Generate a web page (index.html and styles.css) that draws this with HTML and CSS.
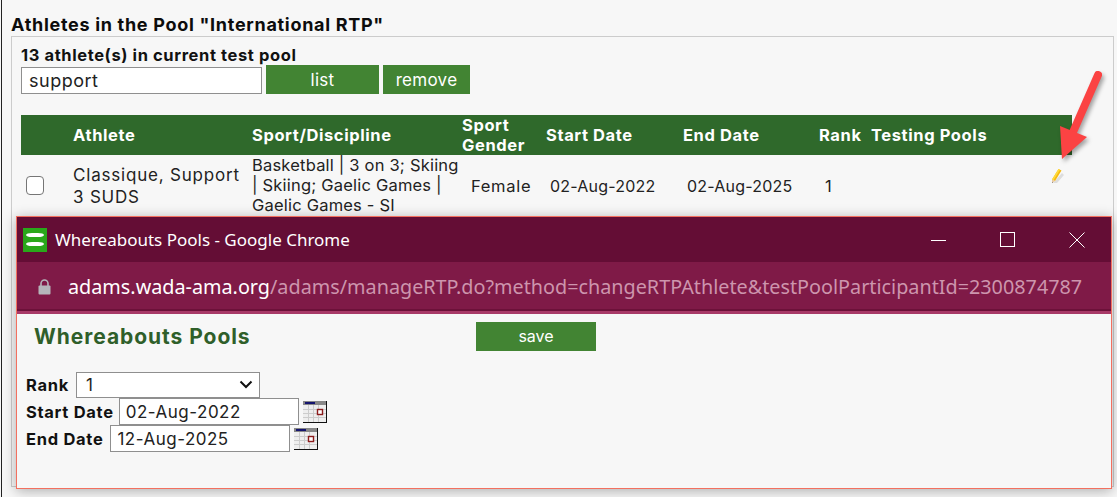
FILE: index.html
```html
<!DOCTYPE html>
<html lang="en">
<head>
  <meta charset="UTF-8" />
  <title>Athletes in the Pool</title>
  <link rel="stylesheet" href="styles.css">
</head>
<body>

<div class="page">
  <h2 class="page-title">Athletes in the Pool "International RTP"</h2>

  <div class="panel">
    <div class="count">13 athlete(s) in current test pool</div>
    <div class="search-row">
      <input class="search-input" type="text" value="support" />
      <button class="btn btn-list">list</button>
      <button class="btn btn-remove">remove</button>
    </div>

    <table class="athletes">
      <colgroup>
        <col class="col-check"><col class="col-athlete"><col class="col-sport"><col class="col-gender">
        <col class="col-start"><col class="col-end"><col class="col-rank"><col class="col-pools">
      </colgroup>
      <thead>
        <tr>
          <th></th>
          <th>Athlete</th>
          <th>Sport/Discipline</th>
          <th>Sport Gender</th>
          <th>Start Date</th>
          <th>End Date</th>
          <th>Rank</th>
          <th>Testing Pools</th>
        </tr>
      </thead>
      <tbody>
        <tr>
          <td><span class="checkbox"></span></td>
          <td class="athlete-name">Classique, Support 3 SUDS</td>
          <td class="sport-cell">Basketball | 3 on 3; Skiing | Skiing; Gaelic Games | Gaelic Games - SI</td>
          <td class="gender-cell">Female</td>
          <td class="date-cell">02-Aug-2022</td>
          <td class="date-cell">02-Aug-2025</td>
          <td class="rank-cell">1</td>
          <td class="pencil-cell">
            <svg class="pencil" width="14" height="16" viewBox="0 0 14 16">
              <path d="M11 5 L13 7 L6 15 L2 15 Z" fill="#ddd"/>
              <path d="M7.5 1 L10.5 2.5 L4 13 L1 11.5 Z" fill="#f7b90f"/>
              <path d="M7.5 1 L9 1.8 L2.5 12.3 L1 11.5 Z" fill="#ffdc3c"/>
              <path d="M1 11.5 L4 13 L1 15 Z" fill="#e8c9a0"/>
              <path d="M1 14 L2 14.4 L1 15 Z" fill="#555"/>
            </svg>
          </td>
        </tr>
      </tbody>
    </table>
  </div>
</div>

<!-- red annotation arrow -->
<svg class="arrow" width="60" height="110" viewBox="0 0 60 110">
  <line x1="49" y1="6" x2="21" y2="70" stroke="#fb4343" stroke-width="8" stroke-linecap="round"/>
  <path d="M11 57 L38 68 L13 90 Z" fill="#fb4343"/>
</svg>

<!-- popup window -->
<div class="popup">
  <div class="popup-titlebar">
    <div class="favicon"><span></span><span></span></div>
    <div class="popup-title">Whereabouts Pools - Google Chrome</div>
    <div class="window-btns">
      <svg width="16" height="16" viewBox="0 0 16 16"><line x1="0" y1="8.5" x2="15" y2="8.5" stroke="#fff"/></svg>
      <svg width="16" height="16" viewBox="0 0 16 16"><rect x="0.5" y="0.5" width="14" height="14" fill="none" stroke="#fff"/></svg>
      <svg width="16" height="16" viewBox="0 0 16 16"><path d="M0.5 0.5 L15.5 15.5 M15.5 0.5 L0.5 15.5" stroke="#fff" fill="none"/></svg>
    </div>
  </div>
  <div class="popup-urlbar">
    <svg class="lock" width="13" height="16" viewBox="0 0 13 16">
      <path d="M3 7 V4.5 a3.5 3.5 0 0 1 7 0 V7" fill="none" stroke="#b5b5ba" stroke-width="1.6"/>
      <rect x="0.5" y="6.5" width="12" height="9" rx="1" fill="#b5b5ba"/>
    </svg>
    <div class="url"><span class="url-host">adams.wada-ama.org</span>/adams/manageRTP.do?method=changeRTPAthlete&amp;testPoolParticipantId=2300874787</div>
  </div>
  <div class="popup-body">
    <div class="popup-head">
      <h3 class="popup-heading">Whereabouts Pools</h3>
      <button class="btn btn-save">save</button>
    </div>
    <div class="form-row">
      <label class="label-wide">Rank</label>
      <div class="fake-select">
        <span>1</span>
        <svg width="14" height="9" viewBox="0 0 14 9"><path d="M1.5 1.5 L7 7 L12.5 1.5" fill="none" stroke="#111" stroke-width="2"/></svg>
      </div>
    </div>
    <div class="form-row">
      <label>Start Date</label>
      <input class="date-input" type="text" value="02-Aug-2022" />
      <svg class="cal" width="24" height="22" viewBox="0 0 24 22">
        <rect width="24" height="22" fill="#111"/>
        <rect x="0" y="0" width="23" height="21" fill="#eee"/>
        <rect x="0" y="0" width="23" height="4" fill="#888"/>
        <rect x="2" y="1" width="10" height="2" fill="#14146e"/>
        <path d="M0 8.5 H23 M0 12.5 H23 M0 16.5 H23 M5.5 4 V21 M10.5 4 V21 M15.5 4 V21" stroke="#ccc"/>
        <rect x="14.5" y="8.5" width="5" height="5" fill="#fff" stroke="#8c1c1c" stroke-width="1.4"/>
      </svg>
    </div>
    <div class="form-row">
      <label class="label-wide">End Date</label>
      <input class="date-input" type="text" value="12-Aug-2025" />
      <svg class="cal" width="24" height="22" viewBox="0 0 24 22">
        <rect width="24" height="22" fill="#111"/>
        <rect x="0" y="0" width="23" height="21" fill="#eee"/>
        <rect x="0" y="0" width="23" height="4" fill="#888"/>
        <rect x="2" y="1" width="10" height="2" fill="#14146e"/>
        <path d="M0 8.5 H23 M0 12.5 H23 M0 16.5 H23 M5.5 4 V21 M10.5 4 V21 M15.5 4 V21" stroke="#ccc"/>
        <rect x="14.5" y="8.5" width="5" height="5" fill="#fff" stroke="#8c1c1c" stroke-width="1.4"/>
      </svg>
    </div>
  </div>
</div>

</body>
</html>
```

FILE: styles.css
```css
* { box-sizing: border-box; }

body {
  margin: 0;
  height: 497px;
  overflow: hidden;
  background: #f7f7f7;
  color: #111;
  font-family: 'Inter', 'Liberation Sans', sans-serif;
}

.page {
  height: 497px;
  margin-left: 1px;
  border-left: 1px solid #222;
  padding: 15px 3px 10px 9px;
  display: flex;
  flex-direction: column;
}

.page-title {
  margin: 0 0 1px;
  font-size: 18px;
  line-height: 20px;
  letter-spacing: 0.7px;
  font-weight: 700;
  color: #0c0c0c;
}

.panel {
  flex: 1;
  border: 1px solid #ccc;
  padding: 10px 9px;
}

.count {
  font-size: 16.5px;
  line-height: 17px;
  letter-spacing: 0.6px;
  font-weight: 700;
}

.search-row {
  display: flex;
  gap: 4px;
  margin-top: 1px;
}

.search-input {
  width: 241px;
  height: 27px;
  margin-top: 2px;
  border: 1px solid #8f8f8f;
  background: #fff;
  padding: 0 7px;
  font-family: inherit;
  font-size: 18px;
  letter-spacing: 0.5px;
  color: #222;
  outline: none;
}

.btn {
  border: none;
  background: #428433;
  color: #fff;
  font-family: inherit;
  font-size: 17px;
  letter-spacing: 0.3px;
  padding: 0;
  cursor: pointer;
}

.btn-list { width: 113px; height: 29px; }
.btn-remove { width: 87px; height: 29px; }

.athletes {
  width: 1051px;
  margin-top: 21px;
  border-collapse: collapse;
  table-layout: fixed;
}

.col-check { width: 52px; }
.col-athlete { width: 179px; }
.col-sport { width: 210px; }
.col-gender { width: 84px; }
.col-start { width: 137px; }
.col-end { width: 136px; }
.col-rank { width: 52px; }
.col-pools { width: 201px; }

.athletes th {
  height: 40px;
  padding: 0;
  background: #2f692b;
  color: #fff;
  font-size: 16.5px;
  line-height: 20px;
  letter-spacing: 0.6px;
  font-weight: 700;
  text-align: left;
}

.athletes td {
  padding: 0;
  height: 61px;
  font-size: 16.5px;
  line-height: 20px;
  color: #222;
  vertical-align: middle;
}

.athletes td.athlete-name {
  line-height: 22px;
  font-size: 17px;
  letter-spacing: 0.8px;
}

.athletes td.sport-cell {
  vertical-align: top;
  letter-spacing: 0.2px;
}

.athletes td.gender-cell {
  padding-left: 9px;
  letter-spacing: 0.7px;
}

.athletes td.date-cell {
  padding-left: 4px;
  font-size: 16px;
  letter-spacing: 0.2px;
}

.athletes td.rank-cell { padding-left: 6px; }

.athletes td.pencil-cell {
  vertical-align: top;
  padding: 13px 7px 0 0;
}

.checkbox {
  display: block;
  width: 18px;
  height: 19px;
  margin-left: 5px;
  border: 1.5px solid #767676;
  border-radius: 4px;
  background: #fff;
}

.pencil { display: block; margin-left: auto; }

.arrow {
  position: absolute;
  left: 1049px;
  top: 69px;
  filter: drop-shadow(2px 3px 2px rgba(0,0,0,0.35));
}

.popup {
  position: absolute;
  left: 16px;
  top: 216px;
  width: 1096px;
  height: 273px;
  border: 1px solid #f3705f;
  background: #f7f7f7;
  box-shadow: 0 2px 12px rgba(0,0,0,0.3);
  display: flex;
  flex-direction: column;
}

.popup-titlebar {
  height: 45px;
  background: #640d35;
  display: flex;
  align-items: center;
  padding-left: 6px;
  color: #fff;
}

.favicon {
  width: 24px;
  height: 24px;
  background: #2aa81a;
  display: flex;
  flex-direction: column;
  justify-content: center;
  gap: 5px;
  padding: 0 3px;
}

.favicon span {
  display: block;
  height: 4px;
  background: #fff;
  border-radius: 6px / 2px;
}

.popup-title {
  margin-left: 8px;
  font-family: 'Noto Sans', 'Open Sans', sans-serif;
  font-size: 17px;
}

.window-btns {
  margin-left: auto;
  display: flex;
  gap: 53px;
  margin-right: 26px;
}

.popup-urlbar {
  height: 52px;
  background: #7f1a47;
  border-bottom: 3px solid #a83a68;
  box-shadow: inset 0 -2px 0 #6c1139;
  display: flex;
  align-items: center;
  padding-left: 21px;
  font-family: 'Noto Sans', 'Open Sans', sans-serif;
  font-size: 19.8px;
  color: #cd95ad;
}

.url { margin-left: 17px; white-space: nowrap; }
.url-host { color: #fff; }

.popup-body {
  flex: 1;
  padding: 7px 9px;
}

.popup-head {
  display: flex;
  align-items: center;
  height: 30px;
  margin-bottom: 20px;
}

.popup-heading {
  margin: 0 0 0 8px;
  width: 442px;
  font-size: 21px;
  letter-spacing: 0.95px;
  font-weight: 700;
  color: #2f5f2a;
}

.btn-save {
  width: 120px;
  height: 29px;
  font-size: 16px;
  letter-spacing: 0;
}

.form-row {
  display: flex;
  align-items: center;
  height: 27px;
}

.form-row label {
  font-size: 16.5px;
  letter-spacing: 0.7px;
  font-weight: 700;
  color: #111;
  margin-right: 5px;
}

.form-row label.label-wide { margin-right: 7px; }

.fake-select {
  width: 184px;
  height: 26px;
  border: 1px solid #8f8f8f;
  background: #fff;
  display: flex;
  align-items: center;
  justify-content: space-between;
  padding: 0 6px 0 9px;
  font-size: 17px;
  color: #222;
}

.date-input {
  width: 180px;
  height: 27px;
  border: 1px solid #8f8f8f;
  background: #fff;
  padding: 0 6px;
  font-family: inherit;
  font-size: 17px;
  letter-spacing: 0.5px;
  color: #222;
  outline: none;
}

.cal { margin-left: 4px; }
```
